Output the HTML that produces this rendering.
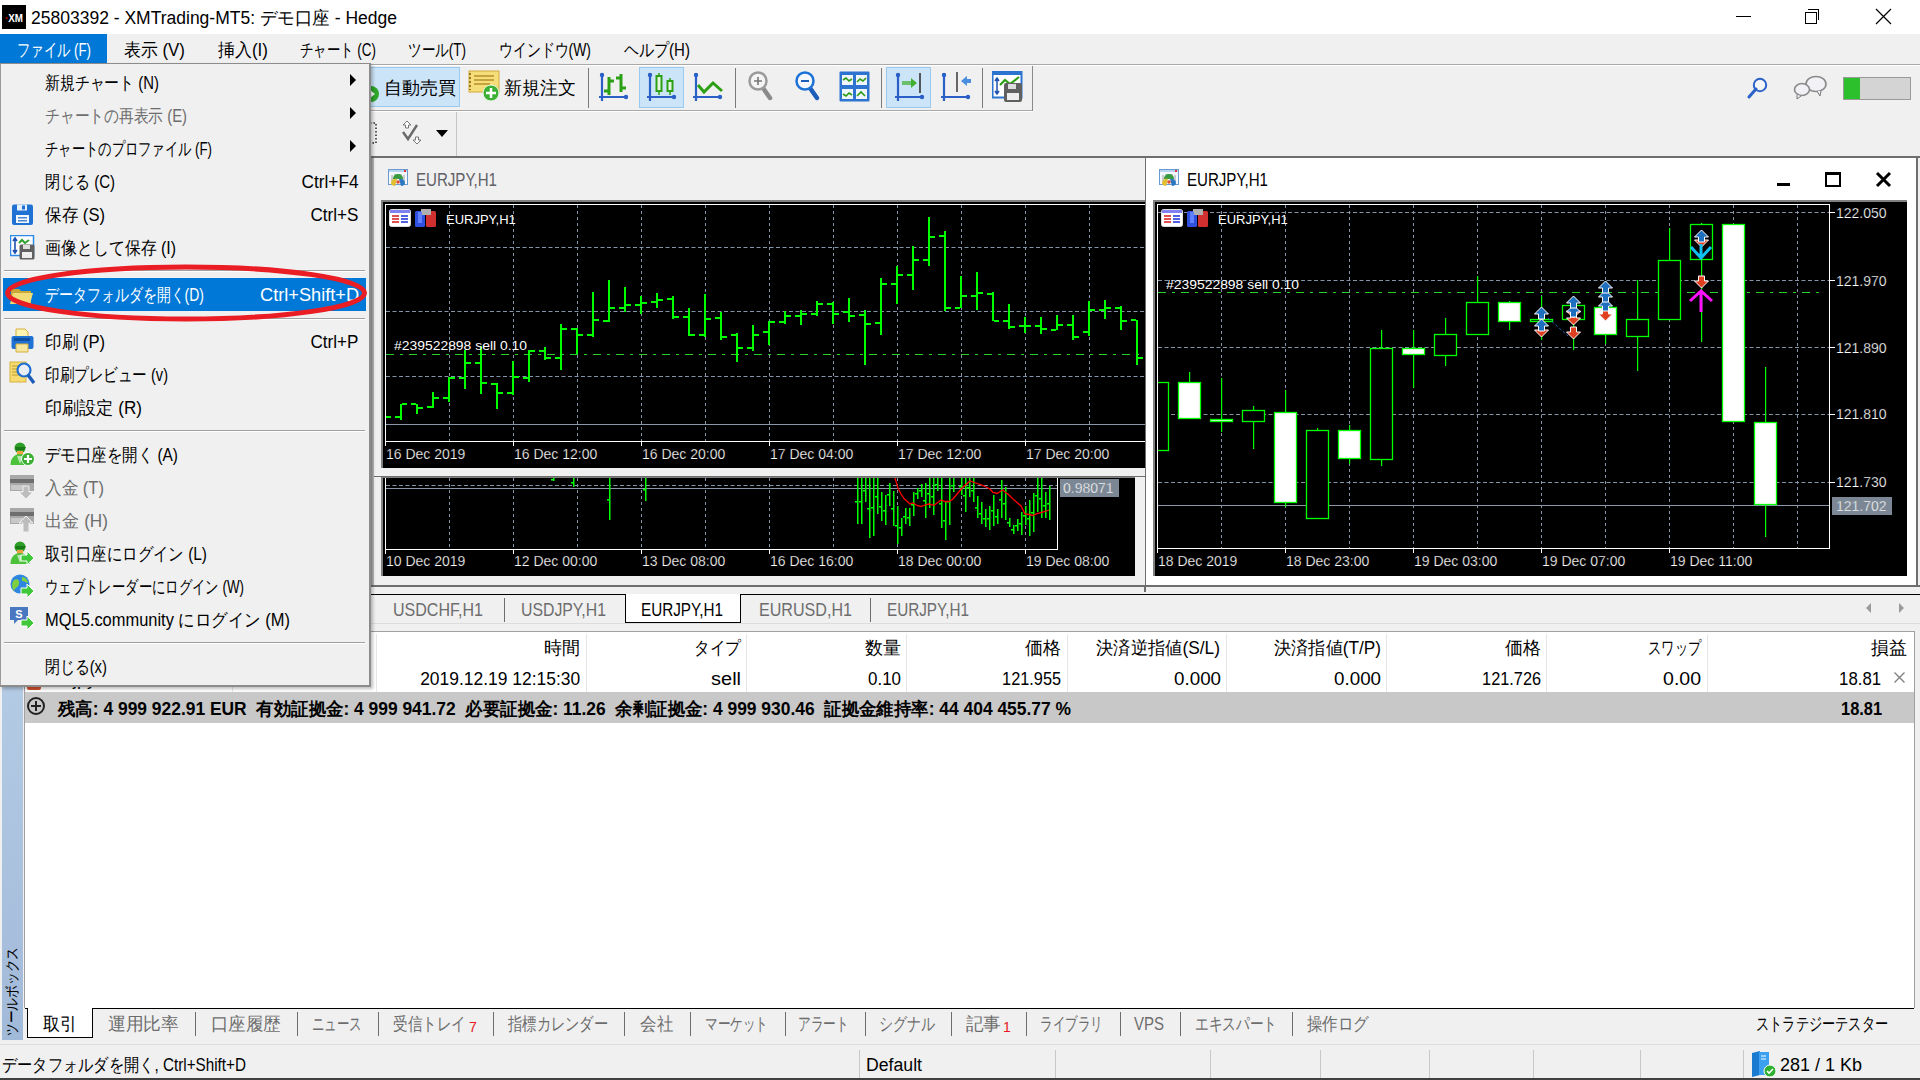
<!DOCTYPE html><html><head><meta charset="utf-8"><style>
html,body{margin:0;padding:0;}
body{width:1920px;height:1080px;overflow:hidden;position:relative;background:#f0f0f0;font-family:"Liberation Sans", sans-serif;}
body>div{position:absolute;white-space:nowrap;}
svg{position:absolute;}
</style></head><body>
<div style="left:0px;top:0px;width:1920px;height:34px;background:#ffffff;"></div>
<div style="left:2px;top:5px;width:24px;height:24px;background:#000;"></div>
<div id="t1" class="fit" style="left:5px;top:12.7px;font-size:11px;line-height:11px;color:#fff;font-weight:700;transform:scaleX(0.8923);transform-origin:left 0;"><span style="color:#d00">·</span>XM</div>
<div id="t2" class="fit" style="left:31px;top:8.8px;font-size:18px;line-height:18px;color:#000;transform:scaleX(0.9722);transform-origin:left 0;">25803392 - XMTrading-MT5: デモ口座 - Hedge</div>
<div style="left:1736px;top:16px;width:15px;height:1px;background:#000;"></div>
<div style="left:1805px;top:12px;width:10px;height:10px;border:1px solid #000;"></div>
<div style="left:1808px;top:9px;width:10px;height:10px;border-top:1px solid #000;border-right:1px solid #000;"></div>
<svg style="position:absolute;left:1875px;top:8px;" width="18" height="17" viewBox="0 0 18 17"><path d="M1 1L16 16M16 1L1 16" stroke="#000" stroke-width="1.2"/></svg>
<div style="left:0px;top:34px;width:1920px;height:30px;background:#f0f0f0;"></div>
<div style="left:0px;top:34px;width:107px;height:29px;background:#0078d7;"></div>
<div id="t3" class="fit" style="left:17px;top:41.3px;font-size:18px;line-height:18px;color:#fff;transform:scaleX(0.7401);transform-origin:left 0;">ファイル (F)</div>
<div id="t4" class="fit" style="left:124px;top:41.3px;font-size:18px;line-height:18px;color:#000;transform:scaleX(0.9385);transform-origin:left 0;">表示 (V)</div>
<div id="t5" class="fit" style="left:218px;top:41.3px;font-size:18px;line-height:18px;color:#000;transform:scaleX(0.9434);transform-origin:left 0;">挿入(I)</div>
<div id="t6" class="fit" style="left:300px;top:41.3px;font-size:18px;line-height:18px;color:#000;transform:scaleX(0.7451);transform-origin:left 0;">チャート (C)</div>
<div id="t7" class="fit" style="left:408px;top:41.3px;font-size:18px;line-height:18px;color:#000;transform:scaleX(0.7534);transform-origin:left 0;">ツール(T)</div>
<div id="t8" class="fit" style="left:499px;top:41.3px;font-size:18px;line-height:18px;color:#000;transform:scaleX(0.7732);transform-origin:left 0;">ウインドウ(W)</div>
<div id="t9" class="fit" style="left:624px;top:41.3px;font-size:18px;line-height:18px;color:#000;transform:scaleX(0.8354);transform-origin:left 0;">ヘルプ(H)</div>
<div style="left:0px;top:64px;width:1920px;height:1px;background:#a8a8a8;"></div>
<div style="left:0px;top:65px;width:1920px;height:1px;background:#ffffff;"></div>
<div style="left:0px;top:110px;width:1033px;height:1px;background:#a8a8a8;"></div>
<div style="left:0px;top:111px;width:1033px;height:1px;background:#ffffff;"></div>
<div style="left:1032px;top:66px;width:1px;height:45px;background:#8a8a8a;"></div>
<div style="left:456px;top:112px;width:1px;height:44px;background:#c4c4c4;"></div>
<div style="left:0px;top:156px;width:1920px;height:2px;background:#6e6e6e;"></div>
<div style="left:369px;top:67px;width:91px;height:40px;background:#cce4f7;border:1px solid #99c9ef;box-sizing:border-box;"></div>
<div id="t10" class="fit" style="left:384px;top:79.3px;font-size:18px;line-height:18px;color:#000;transform:scaleX(1.0000);transform-origin:left 0;">自動売買</div>
<div id="t11" class="fit" style="left:504px;top:79.3px;font-size:18px;line-height:18px;color:#000;transform:scaleX(1.0000);transform-origin:left 0;">新規注文</div>
<div style="left:588px;top:68px;width:1px;height:40px;background:#7a7a7a;"></div>
<div style="left:735px;top:68px;width:1px;height:40px;background:#7a7a7a;"></div>
<div style="left:881px;top:68px;width:1px;height:40px;background:#7a7a7a;"></div>
<div style="left:982px;top:68px;width:1px;height:40px;background:#7a7a7a;"></div>
<div style="left:639px;top:67px;width:45px;height:41px;background:#cce4f7;border:1px solid #99c9ef;box-sizing:border-box;"></div>
<div style="left:886px;top:67px;width:45px;height:41px;background:#cce4f7;border:1px solid #99c9ef;box-sizing:border-box;"></div>
<svg style="position:absolute;left:362px;top:85px;" width="18" height="18" viewBox="0 0 18 18"><circle cx="9" cy="9" r="8" fill="#2fa52a"/><path d="M8 5l5 4-5 4z" fill="#fff"/></svg>
<svg style="position:absolute;left:468px;top:70px;" width="33" height="33" viewBox="0 0 33 33"><rect x="1" y="1" width="30" height="21" fill="#f5de7a" stroke="#d2a83a"/><path d="M6 6h20M6 10h20M6 14h16" stroke="#b8902a" stroke-width="1.6"/><path d="M2 3v17" stroke="#9a7a20" stroke-dasharray="2,2" stroke-width="2"/><circle cx="23" cy="23" r="8" fill="#3cb034" stroke="#e8f5e0"/><path d="M23 18v10M18 23h10" stroke="#fff" stroke-width="2.5"/></svg>
<svg style="position:absolute;left:598px;top:71px;" width="32" height="32" viewBox="0 0 32 32"><path d="M4 2v28M1 26h28" stroke="#2a5fc8" stroke-width="2.2"/><circle cx="4" cy="4" r="2.2" fill="#2a5fc8"/><circle cx="28" cy="26" r="2.2" fill="#2a5fc8"/><path d="M11 6V24M6 20h5M11 10h5" stroke="#2ca014" stroke-width="3"/><path d="M23 3V21M18 7h5M23 17h5" stroke="#2ca014" stroke-width="3"/></svg>
<svg style="position:absolute;left:646px;top:71px;" width="32" height="32" viewBox="0 0 32 32"><path d="M4 2v28M1 26h28" stroke="#2a5fc8" stroke-width="2.2"/><circle cx="4" cy="4" r="2.2" fill="#2a5fc8"/><circle cx="28" cy="26" r="2.2" fill="#2a5fc8"/><path d="M13 2v22M24 7v17" stroke="#2ca014" stroke-width="1.5"/><rect x="10.5" y="5" width="5" height="15" fill="#e6f6e0" stroke="#2ca014" stroke-width="2"/><rect x="21.5" y="10" width="5" height="10" fill="#e6f6e0" stroke="#2ca014" stroke-width="2"/></svg>
<svg style="position:absolute;left:692px;top:71px;" width="32" height="32" viewBox="0 0 32 32"><path d="M4 2v28M1 26h28" stroke="#2a5fc8" stroke-width="2.2"/><circle cx="4" cy="4" r="2.2" fill="#2a5fc8"/><circle cx="28" cy="26" r="2.2" fill="#2a5fc8"/><path d="M6 14l6 7 9-9 9 8" fill="none" stroke="#2ca014" stroke-width="3"/></svg>
<svg style="position:absolute;left:745px;top:70px;" width="32" height="34" viewBox="0 0 32 34"><path d="M18 18l7 10" stroke="#8a8a8a" stroke-width="4.5" stroke-linecap="round"/><circle cx="13" cy="11" r="8.5" fill="#f4f4f4" stroke="#9a9a9a" stroke-width="2.5"/><path d="M13 7v8M9 11h8" stroke="#777" stroke-width="1.6"/></svg>
<svg style="position:absolute;left:792px;top:70px;" width="32" height="34" viewBox="0 0 32 34"><path d="M18 18l7 10" stroke="#1d5cb8" stroke-width="4.5" stroke-linecap="round"/><circle cx="13" cy="11" r="8.5" fill="#f4f8fc" stroke="#1d72d8" stroke-width="2.5"/><path d="M9 11h8" stroke="#1d5cb8" stroke-width="2"/></svg>
<svg style="position:absolute;left:839px;top:71px;" width="32" height="32" viewBox="0 0 32 32"><rect x="0.5" y="0.5" width="30" height="30" rx="1" fill="#2d74d0"/><rect x="3" y="4" width="11" height="10" fill="#eef6fb"/><rect x="17" y="4" width="11" height="10" fill="#eef6fb"/><rect x="3" y="18" width="11" height="10" fill="#eef6fb"/><rect x="17" y="18" width="11" height="10" fill="#eef6fb"/><path d="M4 9l3-2 3 3 3-2M18 11l3-3 3 2 3-3M4 23l3 2 3-3 3 2M18 25l4-4 4 4" stroke="#2c9a14" stroke-width="1.6" fill="none"/></svg>
<svg style="position:absolute;left:894px;top:71px;" width="32" height="32" viewBox="0 0 32 32"><path d="M4 2v28M1 26h28" stroke="#2a5fc8" stroke-width="2.2"/><circle cx="4" cy="4" r="2.2" fill="#2a5fc8"/><circle cx="28" cy="26" r="2.2" fill="#2a5fc8"/><path d="M8 12h11" stroke="#40b030" stroke-width="4" opacity="0.7"/><path d="M17 7l6 5-6 5z" fill="#40b030"/><path d="M26 2v20" stroke="#333" stroke-width="1.6"/></svg>
<svg style="position:absolute;left:940px;top:71px;" width="32" height="32" viewBox="0 0 32 32"><path d="M4 2v28M1 26h28" stroke="#2a5fc8" stroke-width="2.2"/><circle cx="4" cy="4" r="2.2" fill="#2a5fc8"/><circle cx="28" cy="26" r="2.2" fill="#2a5fc8"/><path d="M17 1v20" stroke="#444" stroke-width="1.6"/><path d="M21 10l6-5v3h4v4h-4v3z" fill="#4a8ee0"/></svg>
<svg style="position:absolute;left:992px;top:71px;" width="32" height="32" viewBox="0 0 32 32"><rect x="0.5" y="0.5" width="29" height="26" fill="#fff" stroke="#2d74d0" stroke-width="2"/><rect x="0" y="0" width="30" height="4" fill="#2d74d0"/><path d="M5 8v14M3 10l2-3 2 3M3 20l2 3 2-3" stroke="#1e50b0" stroke-width="1.5" fill="none"/><path d="M8 14l5-5 5 4 9-7" stroke="#2ca014" stroke-width="2.2" fill="none"/><rect x="12" y="12" width="18" height="19" rx="2" fill="#606060"/><rect x="15" y="22" width="12" height="7" fill="#eee"/><rect x="16" y="13" width="8" height="5" fill="#ddd"/></svg>
<svg style="position:absolute;left:1746px;top:76px;" width="24" height="24" viewBox="0 0 24 24"><circle cx="14" cy="9" r="6.2" fill="#f4f6f8" stroke="#2a62c8" stroke-width="2"/><path d="M10 13l-7 8" stroke="#2a62c8" stroke-width="3" stroke-linecap="round"/></svg>
<svg style="position:absolute;left:1793px;top:75px;" width="36" height="26" viewBox="0 0 36 26"><ellipse cx="23" cy="9" rx="10" ry="7.5" fill="#f2f2f6" stroke="#8a8a8a" stroke-width="1.6"/><path d="M24 16l3 5 1-5" fill="#f2f2f6" stroke="#777"/><ellipse cx="9" cy="14.5" rx="7.5" ry="6" fill="#f2f2f6" stroke="#8a8a8a" stroke-width="1.6"/><path d="M4 20l0 4 4-3" fill="#f2f2f6" stroke="#777"/></svg>
<svg style="position:absolute;left:1843px;top:77px;" width="69" height="24" viewBox="0 0 69 24"><rect x="0.5" y="0.5" width="67" height="22" fill="#d4d4d4" stroke="#9a9a9a"/><rect x="1" y="1" width="16" height="21" fill="#2cc02c"/></svg>
<svg style="position:absolute;left:369px;top:122px;" width="9" height="22" viewBox="0 0 9 22"><path d="M1 1h6v20H1" fill="none" stroke="#222" stroke-dasharray="1.5,2" stroke-width="1.5"/></svg>
<svg style="position:absolute;left:400px;top:120px;" width="26" height="26" viewBox="0 0 26 26"><path d="M3 12l5 7 9-14" stroke="#6a6a6a" stroke-width="2.4" fill="none"/><path d="M7 1l-4 4h2.5v3h3v-3h2.5z" fill="#fff" stroke="#777"/><path d="M17 24l4-4h-2.5v-3h-3v3h-2.5z" fill="#fff" stroke="#777"/></svg>
<svg style="position:absolute;left:436px;top:130px;" width="13" height="8" viewBox="0 0 13 8"><path d="M0 0h12L6 7z" fill="#000"/></svg>
<div style="left:369px;top:158px;width:776px;height:429px;background:#f0f0f0;"></div>
<div style="left:369px;top:158px;width:5px;height:429px;background:linear-gradient(90deg,#8a8a8a,#c0c0c0);"></div>
<div id="t12" class="fit" style="left:416px;top:170.8px;font-size:18px;line-height:18px;color:#606068;transform:scaleX(0.8375);transform-origin:left 0;">EURJPY,H1</div>
<div style="left:381px;top:200px;width:764px;height:268px;background:#808080;"></div>
<div style="left:383px;top:202px;width:762px;height:266px;background:#000;"></div>
<div style="left:374px;top:476px;width:771px;height:1px;background:#6e6e6e;"></div>
<div style="left:381px;top:477px;width:754px;height:99px;background:#808080;"></div>
<div style="left:383px;top:478px;width:752px;height:98px;background:#000;"></div>
<div style="left:1145px;top:158px;width:1px;height:429px;background:#6e6e6e;"></div>
<div style="left:1146px;top:158px;width:771px;height:428px;background:#ffffff;"></div>
<div style="left:1916px;top:158px;width:2px;height:429px;background:#6e6e6e;"></div>
<div id="t13" class="fit" style="left:1187px;top:171.3px;font-size:18px;line-height:18px;color:#000;transform:scaleX(0.8375);transform-origin:left 0;">EURJPY,H1</div>
<div style="left:1153px;top:200px;width:754px;height:376px;background:#808080;"></div>
<div style="left:1155px;top:202px;width:752px;height:374px;background:#000;"></div>
<div style="left:0px;top:585px;width:1920px;height:2px;background:#6e6e6e;"></div>
<svg style="position:absolute;left:383px;top:202px;" width="762" height="266" viewBox="0 0 762 266"><g transform="translate(-383,-202)"><line x1="449.5" y1="205" x2="449.5" y2="441" stroke="#8494a8" stroke-dasharray="3,3"/><line x1="513.5" y1="205" x2="513.5" y2="441" stroke="#8494a8" stroke-dasharray="3,3"/><line x1="577.5" y1="205" x2="577.5" y2="441" stroke="#8494a8" stroke-dasharray="3,3"/><line x1="641.5" y1="205" x2="641.5" y2="441" stroke="#8494a8" stroke-dasharray="3,3"/><line x1="705.5" y1="205" x2="705.5" y2="441" stroke="#8494a8" stroke-dasharray="3,3"/><line x1="769.5" y1="205" x2="769.5" y2="441" stroke="#8494a8" stroke-dasharray="3,3"/><line x1="833.5" y1="205" x2="833.5" y2="441" stroke="#8494a8" stroke-dasharray="3,3"/><line x1="897.5" y1="205" x2="897.5" y2="441" stroke="#8494a8" stroke-dasharray="3,3"/><line x1="961.5" y1="205" x2="961.5" y2="441" stroke="#8494a8" stroke-dasharray="3,3"/><line x1="1025.5" y1="205" x2="1025.5" y2="441" stroke="#8494a8" stroke-dasharray="3,3"/><line x1="1089.5" y1="205" x2="1089.5" y2="441" stroke="#8494a8" stroke-dasharray="3,3"/><line x1="386" y1="247.5" x2="1145" y2="247.5" stroke="#8494a8" stroke-dasharray="4,2.5"/><line x1="386" y1="311.5" x2="1145" y2="311.5" stroke="#8494a8" stroke-dasharray="4,2.5"/><line x1="386" y1="376.5" x2="1145" y2="376.5" stroke="#8494a8" stroke-dasharray="4,2.5"/><line x1="386" y1="424.5" x2="1145" y2="424.5" stroke="#8a98aa"/><line x1="386" y1="354.5" x2="1145" y2="354.5" stroke="#2ad02a" stroke-dasharray="8,6,3,6"/><line x1="385.5" y1="204" x2="385.5" y2="446" stroke="#fff"/><line x1="385" y1="204.5" x2="1145" y2="204.5" stroke="#fff"/><line x1="385" y1="441.5" x2="1145" y2="441.5" stroke="#fff"/><line x1="513.5" y1="441" x2="513.5" y2="446" stroke="#fff"/><line x1="641.5" y1="441" x2="641.5" y2="446" stroke="#fff"/><line x1="769.5" y1="441" x2="769.5" y2="446" stroke="#fff"/><line x1="897.5" y1="441" x2="897.5" y2="446" stroke="#fff"/><line x1="1025.5" y1="441" x2="1025.5" y2="446" stroke="#fff"/><path d="M386 416h5v2h-5zM400 404h2v16h-2zM395 416h5v2h-5zM402 403h5v2h-5zM416 404h2v10h-2zM411 403h5v2h-5zM418 407h5v2h-5zM432 392h2v16h-2zM427 406h5v2h-5zM434 397h5v2h-5zM448 377h2v25h-2zM443 397h5v2h-5zM450 377h5v2h-5zM464 350h2v39h-2zM459 377h5v2h-5zM466 362h5v2h-5zM480 346h2v48h-2zM475 362h5v2h-5zM482 382h5v2h-5zM496 383h2v26h-2zM491 383h5v2h-5zM498 392h5v2h-5zM512 361h2v34h-2zM507 392h5v2h-5zM514 376h5v2h-5zM528 350h2v32h-2zM523 377h5v2h-5zM530 350h5v2h-5zM544 347h2v13h-2zM539 350h5v2h-5zM546 357h5v2h-5zM560 324h2v46h-2zM555 357h5v2h-5zM562 328h5v2h-5zM576 328h2v26h-2zM571 328h5v2h-5zM578 334h5v2h-5zM592 292h2v45h-2zM587 334h5v2h-5zM594 319h5v2h-5zM608 280h2v42h-2zM603 320h5v2h-5zM610 307h5v2h-5zM624 287h2v25h-2zM619 307h5v2h-5zM626 304h5v2h-5zM640 296h2v18h-2zM635 304h5v2h-5zM642 302h5v2h-5zM656 293h2v15h-2zM651 301h5v2h-5zM658 299h5v2h-5zM672 296h2v23h-2zM667 298h5v2h-5zM674 316h5v2h-5zM688 308h2v28h-2zM683 316h5v2h-5zM690 334h5v2h-5zM704 294h2v43h-2zM699 334h5v2h-5zM706 318h5v2h-5zM720 312h2v28h-2zM715 317h5v2h-5zM722 336h5v2h-5zM736 333h2v29h-2zM731 334h5v2h-5zM738 347h5v2h-5zM752 325h2v26h-2zM747 347h5v2h-5zM754 334h5v2h-5zM768 321h2v24h-2zM763 331h5v2h-5zM770 321h5v2h-5zM784 311h2v13h-2zM779 321h5v2h-5zM786 315h5v2h-5zM800 310h2v15h-2zM795 315h5v2h-5zM802 313h5v2h-5zM816 301h2v15h-2zM811 313h5v2h-5zM818 303h5v2h-5zM832 302h2v22h-2zM827 303h5v2h-5zM834 313h5v2h-5zM848 298h2v24h-2zM843 311h5v2h-5zM850 315h5v2h-5zM864 310h2v55h-2zM859 314h5v2h-5zM866 323h5v2h-5zM880 278h2v57h-2zM875 322h5v2h-5zM882 283h5v2h-5zM896 266h2v38h-2zM891 283h5v2h-5zM898 274h5v2h-5zM912 246h2v44h-2zM907 274h5v2h-5zM914 259h5v2h-5zM928 217h2v49h-2zM923 259h5v2h-5zM930 236h5v2h-5zM944 231h2v80h-2zM939 235h5v2h-5zM946 307h5v2h-5zM960 276h2v32h-2zM955 307h5v2h-5zM962 295h5v2h-5zM976 272h2v38h-2zM971 295h5v2h-5zM978 292h5v2h-5zM992 292h2v29h-2zM987 293h5v2h-5zM994 320h5v2h-5zM1008 304h2v25h-2zM1003 320h5v2h-5zM1010 326h5v2h-5zM1024 317h2v16h-2zM1019 325h5v2h-5zM1026 325h5v2h-5zM1040 317h2v17h-2zM1035 325h5v2h-5zM1042 328h5v2h-5zM1056 315h2v15h-2zM1051 329h5v2h-5zM1058 324h5v2h-5zM1072 315h2v25h-2zM1067 324h5v2h-5zM1074 336h5v2h-5zM1088 301h2v35h-2zM1083 331h5v2h-5zM1090 309h5v2h-5zM1104 300h2v19h-2zM1099 309h5v2h-5zM1106 307h5v2h-5zM1120 306h2v24h-2zM1115 307h5v2h-5zM1122 320h5v2h-5zM1136 320h2v45h-2zM1131 319h5v2h-5zM1138 357h5v2h-5z" fill="#00ff00"/></g></svg>
<svg style="position:absolute;left:383px;top:478px;" width="752" height="98" viewBox="0 0 752 98"><g transform="translate(-383,-478)"><line x1="449.5" y1="478" x2="449.5" y2="549" stroke="#8494a8" stroke-dasharray="3,3"/><line x1="513.5" y1="478" x2="513.5" y2="549" stroke="#8494a8" stroke-dasharray="3,3"/><line x1="577.5" y1="478" x2="577.5" y2="549" stroke="#8494a8" stroke-dasharray="3,3"/><line x1="641.5" y1="478" x2="641.5" y2="549" stroke="#8494a8" stroke-dasharray="3,3"/><line x1="705.5" y1="478" x2="705.5" y2="549" stroke="#8494a8" stroke-dasharray="3,3"/><line x1="769.5" y1="478" x2="769.5" y2="549" stroke="#8494a8" stroke-dasharray="3,3"/><line x1="833.5" y1="478" x2="833.5" y2="549" stroke="#8494a8" stroke-dasharray="3,3"/><line x1="897.5" y1="478" x2="897.5" y2="549" stroke="#8494a8" stroke-dasharray="3,3"/><line x1="961.5" y1="478" x2="961.5" y2="549" stroke="#8494a8" stroke-dasharray="3,3"/><line x1="1025.5" y1="478" x2="1025.5" y2="549" stroke="#8494a8" stroke-dasharray="3,3"/><line x1="386" y1="485.5" x2="1057" y2="485.5" stroke="#8494a8" stroke-dasharray="4,2.5"/><line x1="386" y1="488.5" x2="1057" y2="488.5" stroke="#8a98aa"/><line x1="385.5" y1="478" x2="385.5" y2="554" stroke="#fff"/><line x1="385" y1="549.5" x2="1058" y2="549.5" stroke="#fff"/><line x1="1057.5" y1="478" x2="1057.5" y2="550" stroke="#fff"/><line x1="513.5" y1="549" x2="513.5" y2="554" stroke="#fff"/><line x1="641.5" y1="549" x2="641.5" y2="554" stroke="#fff"/><line x1="769.5" y1="549" x2="769.5" y2="554" stroke="#fff"/><line x1="897.5" y1="549" x2="897.5" y2="554" stroke="#fff"/><line x1="1025.5" y1="549" x2="1025.5" y2="554" stroke="#fff"/><path d="M553 478h1.5v3h-1.5zM551 479h2v1.5h-2zM573 478h1.5v9h-1.5zM571 482h2v1.5h-2zM609 478h1.5v42h-1.5zM607 499h2v1.5h-2zM645 478h1.5v23h-1.5zM643 489h2v1.5h-2zM857 478h1.5v46h-1.5zM855 501h2v1.5h-2zM861 478h1.5v46h-1.5zM859 501h2v1.5h-2zM865 478h1.5v24h-1.5zM863 490h2v1.5h-2zM869 478h1.5v60h-1.5zM867 508h2v1.5h-2zM873 478h1.5v58h-1.5zM871 507h2v1.5h-2zM877 478h1.5v36h-1.5zM875 496h2v1.5h-2zM881 492h1.5v29h-1.5zM879 506h2v1.5h-2zM885 495h1.5v30h-1.5zM883 510h2v1.5h-2zM889 483h1.5v23h-1.5zM887 494h2v1.5h-2zM893 491h1.5v35h-1.5zM891 508h2v1.5h-2zM897 506h1.5v38h-1.5zM895 525h2v1.5h-2zM901 518h1.5v18h-1.5zM899 527h2v1.5h-2zM905 508h1.5v16h-1.5zM903 516h2v1.5h-2zM909 508h1.5v18h-1.5zM907 517h2v1.5h-2zM913 492h1.5v24h-1.5zM911 504h2v1.5h-2zM917 488h1.5v11h-1.5zM915 493h2v1.5h-2zM921 484h1.5v13h-1.5zM919 490h2v1.5h-2zM925 483h1.5v35h-1.5zM923 500h2v1.5h-2zM929 478h1.5v30h-1.5zM927 493h2v1.5h-2zM933 478h1.5v37h-1.5zM931 496h2v1.5h-2zM937 478h1.5v13h-1.5zM935 484h2v1.5h-2zM941 478h1.5v50h-1.5zM939 503h2v1.5h-2zM945 501h1.5v39h-1.5zM943 520h2v1.5h-2zM949 478h1.5v47h-1.5zM947 501h2v1.5h-2zM953 478h1.5v14h-1.5zM951 485h2v1.5h-2zM961 478h1.5v17h-1.5zM959 486h2v1.5h-2zM965 478h1.5v34h-1.5zM963 495h2v1.5h-2zM969 478h1.5v19h-1.5zM967 487h2v1.5h-2zM973 478h1.5v24h-1.5zM971 490h2v1.5h-2zM977 496h1.5v22h-1.5zM975 507h2v1.5h-2zM981 502h1.5v22h-1.5zM979 513h2v1.5h-2zM985 509h1.5v18h-1.5zM983 518h2v1.5h-2zM989 506h1.5v24h-1.5zM987 518h2v1.5h-2zM993 495h1.5v31h-1.5zM991 510h2v1.5h-2zM997 509h1.5v15h-1.5zM995 516h2v1.5h-2zM1001 480h1.5v38h-1.5zM999 499h2v1.5h-2zM1005 487h1.5v33h-1.5zM1003 503h2v1.5h-2zM1009 518h1.5v9h-1.5zM1007 522h2v1.5h-2zM1013 525h1.5v9h-1.5zM1011 529h2v1.5h-2zM1017 519h1.5v12h-1.5zM1015 525h2v1.5h-2zM1021 512h1.5v23h-1.5zM1019 523h2v1.5h-2zM1025 506h1.5v19h-1.5zM1023 515h2v1.5h-2zM1029 500h1.5v36h-1.5zM1027 518h2v1.5h-2zM1033 493h1.5v39h-1.5zM1031 512h2v1.5h-2zM1037 478h1.5v34h-1.5zM1035 495h2v1.5h-2zM1041 478h1.5v40h-1.5zM1039 498h2v1.5h-2zM1045 492h1.5v26h-1.5zM1043 505h2v1.5h-2zM1049 486h1.5v34h-1.5zM1047 503h2v1.5h-2z" fill="#00ff00"/><path d="M895 478 L898 488 L901 494 L904 498.5 L910 504 L913 503 L917 505.5 L921 506.5 L925 505 L929 504 L934 505.4 L937 503 L941 500 L945 501.5 L949 501.5 L953 499 L962 488 L970 481 L973 482 L977 483.5 L981 484.7 L985 486.5 L990 489 L993 492.5 L997 493.5 L1001 491 L1003 490 L1005 492 L1009 495 L1013 499 L1017 502.5 L1021 506 L1025 514 L1029 514.5 L1033 515.5 L1037 513.7 L1041 512.6 L1045 511.5 L1049 510" fill="none" stroke="#ff0000" stroke-width="1.3"/></g></svg>
<svg style="position:absolute;left:1155px;top:202px;" width="752" height="374" viewBox="0 0 752 374"><g transform="translate(-1155,-202)"><line x1="1221.5" y1="205" x2="1221.5" y2="548" stroke="#8494a8" stroke-dasharray="3,3"/><line x1="1285.5" y1="205" x2="1285.5" y2="548" stroke="#8494a8" stroke-dasharray="3,3"/><line x1="1349.5" y1="205" x2="1349.5" y2="548" stroke="#8494a8" stroke-dasharray="3,3"/><line x1="1413.5" y1="205" x2="1413.5" y2="548" stroke="#8494a8" stroke-dasharray="3,3"/><line x1="1477.5" y1="205" x2="1477.5" y2="548" stroke="#8494a8" stroke-dasharray="3,3"/><line x1="1541.5" y1="205" x2="1541.5" y2="548" stroke="#8494a8" stroke-dasharray="3,3"/><line x1="1605.5" y1="205" x2="1605.5" y2="548" stroke="#8494a8" stroke-dasharray="3,3"/><line x1="1669.5" y1="205" x2="1669.5" y2="548" stroke="#8494a8" stroke-dasharray="3,3"/><line x1="1733.5" y1="205" x2="1733.5" y2="548" stroke="#8494a8" stroke-dasharray="3,3"/><line x1="1797.5" y1="205" x2="1797.5" y2="548" stroke="#8494a8" stroke-dasharray="3,3"/><line x1="1158" y1="212.5" x2="1829" y2="212.5" stroke="#8494a8" stroke-dasharray="4,2.5"/><line x1="1158" y1="280.5" x2="1829" y2="280.5" stroke="#8494a8" stroke-dasharray="4,2.5"/><line x1="1158" y1="347.5" x2="1829" y2="347.5" stroke="#8494a8" stroke-dasharray="4,2.5"/><line x1="1158" y1="414.5" x2="1829" y2="414.5" stroke="#8494a8" stroke-dasharray="4,2.5"/><line x1="1158" y1="482.5" x2="1829" y2="482.5" stroke="#8494a8" stroke-dasharray="4,2.5"/><line x1="1158" y1="505.5" x2="1829" y2="505.5" stroke="#8a98aa"/><line x1="1158" y1="292.5" x2="1823" y2="292.5" stroke="#2ad02a" stroke-dasharray="8,6,3,6"/><line x1="1157.5" y1="204" x2="1157.5" y2="553" stroke="#fff"/><line x1="1157" y1="204.5" x2="1830" y2="204.5" stroke="#fff"/><line x1="1157" y1="548.5" x2="1830" y2="548.5" stroke="#fff"/><line x1="1829.5" y1="204" x2="1829.5" y2="549" stroke="#fff"/><line x1="1285.5" y1="548" x2="1285.5" y2="553" stroke="#fff"/><line x1="1413.5" y1="548" x2="1413.5" y2="553" stroke="#fff"/><line x1="1541.5" y1="548" x2="1541.5" y2="553" stroke="#fff"/><line x1="1669.5" y1="548" x2="1669.5" y2="553" stroke="#fff"/><line x1="1829" y1="212.5" x2="1835" y2="212.5" stroke="#fff"/><line x1="1829" y1="280.5" x2="1835" y2="280.5" stroke="#fff"/><line x1="1829" y1="347.5" x2="1835" y2="347.5" stroke="#fff"/><line x1="1829" y1="414.5" x2="1835" y2="414.5" stroke="#fff"/><line x1="1829" y1="482.5" x2="1835" y2="482.5" stroke="#fff"/><rect x="1157" y="382" width="1.2" height="69" fill="#00ff00"/><rect x="1146.5" y="382.5" width="22" height="68" fill="#000" stroke="#00ff00" stroke-width="1.3"/><rect x="1189" y="372" width="1.2" height="47" fill="#00ff00"/><rect x="1178.5" y="382.5" width="22" height="36" fill="#fff" stroke="#00ff00" stroke-width="1.3"/><rect x="1221" y="378" width="1.2" height="54" fill="#00ff00"/><rect x="1210.5" y="419.5" width="22" height="2" fill="#fff" stroke="#00ff00" stroke-width="1.3"/><rect x="1253" y="406" width="1.2" height="43" fill="#00ff00"/><rect x="1242.5" y="410.5" width="22" height="11" fill="#000" stroke="#00ff00" stroke-width="1.3"/><rect x="1285" y="390" width="1.2" height="117" fill="#00ff00"/><rect x="1274.5" y="412.5" width="22" height="90" fill="#fff" stroke="#00ff00" stroke-width="1.3"/><rect x="1317" y="428" width="1.2" height="91" fill="#00ff00"/><rect x="1306.5" y="430.5" width="22" height="88" fill="#000" stroke="#00ff00" stroke-width="1.3"/><rect x="1349" y="425" width="1.2" height="39" fill="#00ff00"/><rect x="1338.5" y="430.5" width="22" height="28" fill="#fff" stroke="#00ff00" stroke-width="1.3"/><rect x="1381" y="330" width="1.2" height="136" fill="#00ff00"/><rect x="1370.5" y="348.5" width="22" height="111" fill="#000" stroke="#00ff00" stroke-width="1.3"/><rect x="1413" y="330" width="1.2" height="58" fill="#00ff00"/><rect x="1402.5" y="348.5" width="22" height="6" fill="#fff" stroke="#00ff00" stroke-width="1.3"/><rect x="1445" y="318" width="1.2" height="48" fill="#00ff00"/><rect x="1434.5" y="334.5" width="22" height="21" fill="#000" stroke="#00ff00" stroke-width="1.3"/><rect x="1477" y="276" width="1.2" height="59" fill="#00ff00"/><rect x="1466.5" y="302.5" width="22" height="32" fill="#000" stroke="#00ff00" stroke-width="1.3"/><rect x="1509" y="301" width="1.2" height="29" fill="#00ff00"/><rect x="1498.5" y="302.5" width="22" height="19" fill="#fff" stroke="#00ff00" stroke-width="1.3"/><rect x="1541" y="296" width="1.2" height="44" fill="#00ff00"/><rect x="1530.5" y="319.5" width="22" height="2" fill="#000" stroke="#00ff00" stroke-width="1.3"/><rect x="1573" y="297" width="1.2" height="53" fill="#00ff00"/><rect x="1562.5" y="305.5" width="22" height="14" fill="#000" stroke="#00ff00" stroke-width="1.3"/><rect x="1605" y="281" width="1.2" height="63" fill="#00ff00"/><rect x="1594.5" y="307.5" width="22" height="27" fill="#fff" stroke="#00ff00" stroke-width="1.3"/><rect x="1637" y="280" width="1.2" height="91" fill="#00ff00"/><rect x="1626.5" y="319.5" width="22" height="17" fill="#000" stroke="#00ff00" stroke-width="1.3"/><rect x="1669" y="228" width="1.2" height="92" fill="#00ff00"/><rect x="1658.5" y="260.5" width="22" height="59" fill="#000" stroke="#00ff00" stroke-width="1.3"/><rect x="1701" y="223" width="1.2" height="119" fill="#00ff00"/><rect x="1690.5" y="224.5" width="22" height="35" fill="#000" stroke="#00ff00" stroke-width="1.3"/><rect x="1733" y="224" width="1.2" height="198" fill="#00ff00"/><rect x="1722.5" y="224.5" width="22" height="197" fill="#fff" stroke="#00ff00" stroke-width="1.3"/><rect x="1765" y="367" width="1.2" height="170" fill="#00ff00"/><rect x="1754.5" y="422.5" width="22" height="82" fill="#fff" stroke="#00ff00" stroke-width="1.3"/><rect x="1155" y="204" width="2" height="345" fill="#000"/><line x1="1157.5" y1="204" x2="1157.5" y2="553" stroke="#fff"/><path d="M1541.5 337l-7 -7h4v-5h6v5h4z" fill="#e04020" stroke="#fff" stroke-width="1"/><path d="M1541.5 319l-7 7h4v5h6v-5h4z" fill="#1f6fc0" stroke="#fff" stroke-width="1"/><path d="M1541.5 307l-7 7h4v5h6v-5h4z" fill="#1f6fc0" stroke="#fff" stroke-width="1"/><path d="M1573.5 339l-7 -7h4v-5h6v5h4z" fill="#e04020" stroke="#fff" stroke-width="1"/><path d="M1573.5 325l-7 -7h4v-5h6v5h4z" fill="#e04020" stroke="#fff" stroke-width="1"/><path d="M1573.5 318l-7 -7h4v-5h6v5h4z" fill="#e04020" stroke="#fff" stroke-width="1"/><path d="M1573.5 305l-7 7h4v5h6v-5h4z" fill="#1f6fc0" stroke="#fff" stroke-width="1"/><path d="M1573.5 296l-7 7h4v5h6v-5h4z" fill="#1f6fc0" stroke="#fff" stroke-width="1"/><path d="M1605.5 321l-7 -7h4v-5h6v5h4z" fill="#e04020" stroke="#fff" stroke-width="1"/><path d="M1605.5 299l-7 7h4v5h6v-5h4z" fill="#1f6fc0" stroke="#fff" stroke-width="1"/><path d="M1605.5 290l-7 7h4v5h6v-5h4z" fill="#1f6fc0" stroke="#fff" stroke-width="1"/><path d="M1605.5 281l-7 7h4v5h6v-5h4z" fill="#1f6fc0" stroke="#fff" stroke-width="1"/><path d="M1701.5 247l-7 -7h4v-5h6v5h4z" fill="#e04020" stroke="#fff" stroke-width="1"/><path d="M1701.5 230l-7 7h4v5h6v-5h4z" fill="#1f6fc0" stroke="#fff" stroke-width="1"/><path d="M1701.5 288l-7 -7h4v-5h6v5h4z" fill="#e04020" stroke="#fff" stroke-width="1"/><path d="M1691 247L1701 258L1711 247M1701 258V244" fill="none" stroke="#10c0f0" stroke-width="3"/><path d="M1690 301L1701 291L1712 301M1701 291V312" fill="none" stroke="#ff10ff" stroke-width="3"/><line x1="1548" y1="318" x2="1568" y2="336" stroke="#2060b0" stroke-dasharray="3,2"/></g></svg>
<div id="t14" style="left:386px;top:447.3px;font-size:14px;line-height:14px;color:#fff;-webkit-text-stroke:0.25px #000;">16 Dec 2019</div>
<div id="t15" style="left:514px;top:447.3px;font-size:14px;line-height:14px;color:#fff;-webkit-text-stroke:0.25px #000;">16 Dec 12:00</div>
<div id="t16" style="left:642px;top:447.3px;font-size:14px;line-height:14px;color:#fff;-webkit-text-stroke:0.25px #000;">16 Dec 20:00</div>
<div id="t17" style="left:770px;top:447.3px;font-size:14px;line-height:14px;color:#fff;-webkit-text-stroke:0.25px #000;">17 Dec 04:00</div>
<div id="t18" style="left:898px;top:447.3px;font-size:14px;line-height:14px;color:#fff;-webkit-text-stroke:0.25px #000;">17 Dec 12:00</div>
<div id="t19" style="left:1026px;top:447.3px;font-size:14px;line-height:14px;color:#fff;-webkit-text-stroke:0.25px #000;">17 Dec 20:00</div>
<div id="t20" style="left:386px;top:554.3px;font-size:14px;line-height:14px;color:#fff;-webkit-text-stroke:0.25px #000;">10 Dec 2019</div>
<div id="t21" style="left:514px;top:554.3px;font-size:14px;line-height:14px;color:#fff;-webkit-text-stroke:0.25px #000;">12 Dec 00:00</div>
<div id="t22" style="left:642px;top:554.3px;font-size:14px;line-height:14px;color:#fff;-webkit-text-stroke:0.25px #000;">13 Dec 08:00</div>
<div id="t23" style="left:770px;top:554.3px;font-size:14px;line-height:14px;color:#fff;-webkit-text-stroke:0.25px #000;">16 Dec 16:00</div>
<div id="t24" style="left:898px;top:554.3px;font-size:14px;line-height:14px;color:#fff;-webkit-text-stroke:0.25px #000;">18 Dec 00:00</div>
<div id="t25" style="left:1026px;top:554.3px;font-size:14px;line-height:14px;color:#fff;-webkit-text-stroke:0.25px #000;">19 Dec 08:00</div>
<div id="t26" style="left:1158px;top:554.3px;font-size:14px;line-height:14px;color:#fff;-webkit-text-stroke:0.25px #000;">18 Dec 2019</div>
<div id="t27" style="left:1286px;top:554.3px;font-size:14px;line-height:14px;color:#fff;-webkit-text-stroke:0.25px #000;">18 Dec 23:00</div>
<div id="t28" style="left:1414px;top:554.3px;font-size:14px;line-height:14px;color:#fff;-webkit-text-stroke:0.25px #000;">19 Dec 03:00</div>
<div id="t29" style="left:1542px;top:554.3px;font-size:14px;line-height:14px;color:#fff;-webkit-text-stroke:0.25px #000;">19 Dec 07:00</div>
<div id="t30" style="left:1670px;top:554.3px;font-size:14px;line-height:14px;color:#fff;-webkit-text-stroke:0.25px #000;">19 Dec 11:00</div>
<div id="t31" style="left:1836px;top:206.3px;font-size:14px;line-height:14px;color:#fff;-webkit-text-stroke:0.25px #000;">122.050</div>
<div id="t32" style="left:1836px;top:274.3px;font-size:14px;line-height:14px;color:#fff;-webkit-text-stroke:0.25px #000;">121.970</div>
<div id="t33" style="left:1836px;top:340.8px;font-size:14px;line-height:14px;color:#fff;-webkit-text-stroke:0.25px #000;">121.890</div>
<div id="t34" style="left:1836px;top:407.3px;font-size:14px;line-height:14px;color:#fff;-webkit-text-stroke:0.25px #000;">121.810</div>
<div id="t35" style="left:1836px;top:475.3px;font-size:14px;line-height:14px;color:#fff;-webkit-text-stroke:0.25px #000;">121.730</div>
<div style="left:1832px;top:497px;width:60px;height:18px;background:#7b8794;"></div>
<div id="t36" style="left:1836px;top:498.8px;font-size:14px;line-height:14px;color:#fff;-webkit-text-stroke:0.35px #7b8794;">121.702</div>
<div style="left:1060px;top:479px;width:59px;height:18px;background:#7b8794;"></div>
<div id="t37" style="left:1063px;top:481.3px;font-size:14px;line-height:14px;color:#fff;-webkit-text-stroke:0.35px #7b8794;">0.98071</div>
<div id="t38" class="fit" style="left:394px;top:338.7px;font-size:13px;line-height:13px;color:#fff;transform:scaleX(1.0696);transform-origin:left 0;">#239522898 sell 0.10</div>
<div id="t39" class="fit" style="left:1166px;top:277.7px;font-size:13px;line-height:13px;color:#fff;transform:scaleX(1.0696);transform-origin:left 0;">#239522898 sell 0.10</div>
<div id="t40" style="left:446px;top:213.2px;font-size:13px;line-height:13px;color:#fff;">EURJPY,H1</div>
<div id="t41" style="left:1218px;top:213.2px;font-size:13px;line-height:13px;color:#fff;">EURJPY,H1</div>
<svg style="position:absolute;left:387px;top:168px;" width="23" height="23" viewBox="0 0 23 23"><rect x="1.5" y="1.5" width="19" height="15" fill="#f4f8fc" stroke="#6a9ad0"/><rect x="2" y="2" width="18" height="2" fill="#b8d4f0"/><rect x="17" y="2" width="2" height="2" fill="#e03030"/><path d="M5 7v7M8 6v9M14 6v8M17 7v7" stroke="#888" stroke-width="0.8"/><path d="M11 6c3 0 5 2 5 5h-10c0-3 2-5 5-5z" fill="#3a9a40"/><path d="M4 15c0-3 3-5 6-4l-2 7c-2 0-4-1-4-3z" fill="#e0c030"/><path d="M18 15c0-3-3-5-6-4l2 7c2 0 4-1 4-3z" fill="#2a78c0"/><circle cx="11" cy="14" r="1.8" fill="#e05030"/></svg>
<svg style="position:absolute;left:1158px;top:168px;" width="23" height="23" viewBox="0 0 23 23"><rect x="1.5" y="1.5" width="19" height="15" fill="#f4f8fc" stroke="#6a9ad0"/><rect x="2" y="2" width="18" height="2" fill="#b8d4f0"/><rect x="17" y="2" width="2" height="2" fill="#e03030"/><path d="M5 7v7M8 6v9M14 6v8M17 7v7" stroke="#888" stroke-width="0.8"/><path d="M11 6c3 0 5 2 5 5h-10c0-3 2-5 5-5z" fill="#3a9a40"/><path d="M4 15c0-3 3-5 6-4l-2 7c-2 0-4-1-4-3z" fill="#e0c030"/><path d="M18 15c0-3-3-5-6-4l2 7c2 0 4-1 4-3z" fill="#2a78c0"/><circle cx="11" cy="14" r="1.8" fill="#e05030"/></svg>
<svg style="position:absolute;left:389px;top:209px;" width="48" height="19" viewBox="0 0 48 19"><rect x="0.5" y="0.5" width="21" height="17" rx="2" fill="#fff" stroke="#ddd"/><rect x="1" y="1" width="20" height="3" fill="#8080f0"/><path d="M3 7h7M3 10h7M3 13h7" stroke="#e05050" stroke-width="2"/><path d="M12 7h7M12 10h7M12 13h7" stroke="#5060e0" stroke-width="2"/><g transform="translate(26,0)"><rect x="0" y="2" width="10" height="16" rx="1.5" fill="#3050e0"/><rect x="11" y="2" width="10" height="16" rx="1.5" fill="#d03030"/><rect x="6" y="0" width="10" height="6" fill="#b0b0b0"/><rect x="3" y="3" width="4" height="11" fill="#6080ff"/></g></svg>
<svg style="position:absolute;left:1161px;top:209px;" width="48" height="19" viewBox="0 0 48 19"><rect x="0.5" y="0.5" width="21" height="17" rx="2" fill="#fff" stroke="#ddd"/><rect x="1" y="1" width="20" height="3" fill="#8080f0"/><path d="M3 7h7M3 10h7M3 13h7" stroke="#e05050" stroke-width="2"/><path d="M12 7h7M12 10h7M12 13h7" stroke="#5060e0" stroke-width="2"/><g transform="translate(26,0)"><rect x="0" y="2" width="10" height="16" rx="1.5" fill="#3050e0"/><rect x="11" y="2" width="10" height="16" rx="1.5" fill="#d03030"/><rect x="6" y="0" width="10" height="6" fill="#b0b0b0"/><rect x="3" y="3" width="4" height="11" fill="#6080ff"/></g></svg>
<div style="left:1777px;top:183px;width:13px;height:3px;background:#000;"></div>
<div style="left:1825px;top:172px;width:16px;height:15px;border:2px solid #000;border-top-width:3px;box-sizing:border-box;"></div>
<svg style="position:absolute;left:1875px;top:171px;" width="18" height="17" viewBox="0 0 18 17"><path d="M2 2L15 15M15 2L2 15" stroke="#000" stroke-width="3"/></svg>
<div style="left:1144px;top:585px;width:2px;height:7px;background:#6e6e6e;"></div>
<div style="left:369px;top:594px;width:1551px;height:1px;background:#000;"></div>
<div style="left:369px;top:623px;width:1551px;height:1px;background:#dcdcdc;"></div>
<div style="left:625px;top:594px;width:116px;height:29px;background:#fff;border:1px solid #000;border-top:none;box-sizing:border-box;"></div>
<div id="t42" class="fit" style="left:393px;top:601.3px;font-size:18px;line-height:18px;color:#6d6d6d;transform:scaleX(0.8910);transform-origin:left 0;">USDCHF,H1</div>
<div id="t43" class="fit" style="left:521px;top:601.3px;font-size:18px;line-height:18px;color:#6d6d6d;transform:scaleX(0.8788);transform-origin:left 0;">USDJPY,H1</div>
<div id="t44" class="fit" style="left:641px;top:601.3px;font-size:18px;line-height:18px;color:#000;transform:scaleX(0.8478);transform-origin:left 0;">EURJPY,H1</div>
<div id="t45" class="fit" style="left:759px;top:601.3px;font-size:18px;line-height:18px;color:#6d6d6d;transform:scaleX(0.8940);transform-origin:left 0;">EURUSD,H1</div>
<div id="t46" class="fit" style="left:887px;top:601.3px;font-size:18px;line-height:18px;color:#6d6d6d;transform:scaleX(0.8478);transform-origin:left 0;">EURJPY,H1</div>
<div style="left:504px;top:598px;width:1px;height:24px;background:#6d6d6d;"></div>
<div style="left:870px;top:598px;width:1px;height:24px;background:#6d6d6d;"></div>
<svg style="position:absolute;left:1864px;top:602px;" width="10" height="12" viewBox="0 0 10 12"><path d="M7 1L2 6L7 11Z" fill="#9a9a9a"/></svg>
<svg style="position:absolute;left:1896px;top:602px;" width="10" height="12" viewBox="0 0 10 12"><path d="M3 1L8 6L3 11Z" fill="#9a9a9a"/></svg>
<div style="left:2px;top:628px;width:21px;height:412px;background:linear-gradient(180deg,#b6cde6,#a2bad9);"></div>
<div style="left:4px;top:1036px;font-size:15px;line-height:15px;color:#000;transform-origin:0 0;transform:rotate(-90deg) scaleX(0.85);">ツールボックス</div>
<div style="left:24px;top:631px;width:1891px;height:1px;background:#a0a0a0;"></div>
<div style="left:24px;top:631px;width:1px;height:377px;background:#a0a0a0;"></div>
<div style="left:25px;top:632px;width:1890px;height:376px;background:#ffffff;"></div>
<div id="t47" class="fit" style="right:1340px;top:639.3px;font-size:18px;line-height:18px;color:#000;transform:scaleX(1.0000);transform-origin:right 0;">時間</div>
<div id="t48" class="fit" style="right:1179px;top:639.3px;font-size:18px;line-height:18px;color:#000;transform:scaleX(0.8704);transform-origin:right 0;">タイプ</div>
<div id="t49" class="fit" style="right:1019px;top:639.3px;font-size:18px;line-height:18px;color:#000;transform:scaleX(1.0000);transform-origin:right 0;">数量</div>
<div id="t50" class="fit" style="right:859px;top:639.3px;font-size:18px;line-height:18px;color:#000;transform:scaleX(1.0000);transform-origin:right 0;">価格</div>
<div id="t51" class="fit" style="right:700px;top:639.3px;font-size:18px;line-height:18px;color:#000;transform:scaleX(0.9611);transform-origin:right 0;">決済逆指値(S/L)</div>
<div id="t52" class="fit" style="right:539px;top:639.3px;font-size:18px;line-height:18px;color:#000;transform:scaleX(0.9554);transform-origin:right 0;">決済指値(T/P)</div>
<div id="t53" class="fit" style="right:379px;top:639.3px;font-size:18px;line-height:18px;color:#000;transform:scaleX(1.0000);transform-origin:right 0;">価格</div>
<div id="t54" class="fit" style="right:219px;top:639.3px;font-size:18px;line-height:18px;color:#000;transform:scaleX(0.7361);transform-origin:right 0;">スワップ</div>
<div id="t55" class="fit" style="right:13px;top:639.3px;font-size:18px;line-height:18px;color:#000;transform:scaleX(1.0000);transform-origin:right 0;">損益</div>
<div style="left:232px;top:634px;width:1px;height:58px;background:#e6e6e6;"></div>
<div style="left:376px;top:634px;width:1px;height:58px;background:#e6e6e6;"></div>
<div style="left:586px;top:634px;width:1px;height:58px;background:#e6e6e6;"></div>
<div style="left:746px;top:634px;width:1px;height:58px;background:#e6e6e6;"></div>
<div style="left:906px;top:634px;width:1px;height:58px;background:#e6e6e6;"></div>
<div style="left:1067px;top:634px;width:1px;height:58px;background:#e6e6e6;"></div>
<div style="left:1226px;top:634px;width:1px;height:58px;background:#e6e6e6;"></div>
<div style="left:1386px;top:634px;width:1px;height:58px;background:#e6e6e6;"></div>
<div style="left:1546px;top:634px;width:1px;height:58px;background:#e6e6e6;"></div>
<div style="left:1707px;top:634px;width:1px;height:58px;background:#e6e6e6;"></div>
<div id="t56" class="fit" style="right:1340px;top:669.8px;font-size:18px;line-height:18px;color:#000;transform:scaleX(0.9688);transform-origin:right 0;">2019.12.19 12:15:30</div>
<div id="t57" class="fit" style="right:1179px;top:669.8px;font-size:18px;line-height:18px;color:#000;transform:scaleX(1.1105);transform-origin:right 0;">sell</div>
<div id="t58" class="fit" style="right:1019px;top:669.8px;font-size:18px;line-height:18px;color:#000;transform:scaleX(0.9416);transform-origin:right 0;">0.10</div>
<div id="t59" class="fit" style="right:859px;top:669.8px;font-size:18px;line-height:18px;color:#000;transform:scaleX(0.9066);transform-origin:right 0;">121.955</div>
<div id="t60" class="fit" style="right:699px;top:669.8px;font-size:18px;line-height:18px;color:#000;transform:scaleX(1.0434);transform-origin:right 0;">0.000</div>
<div id="t61" class="fit" style="right:539px;top:669.8px;font-size:18px;line-height:18px;color:#000;transform:scaleX(1.0434);transform-origin:right 0;">0.000</div>
<div id="t62" class="fit" style="right:379px;top:669.8px;font-size:18px;line-height:18px;color:#000;transform:scaleX(0.9066);transform-origin:right 0;">121.726</div>
<div id="t63" class="fit" style="right:219px;top:669.8px;font-size:18px;line-height:18px;color:#000;transform:scaleX(1.0843);transform-origin:right 0;">0.00</div>
<div id="t64" class="fit" style="right:39px;top:669.8px;font-size:18px;line-height:18px;color:#000;transform:scaleX(0.9324);transform-origin:right 0;">18.81</div>
<svg style="position:absolute;left:1894px;top:672px;" width="11" height="11" viewBox="0 0 11 11"><path d="M0.5 0.5L10.5 10.5M10.5 0.5L0.5 10.5" stroke="#808080" stroke-width="1.4"/></svg>
<div id="t65" style="left:47px;top:669.8px;font-size:18px;line-height:18px;color:#000;">eurjpy</div>
<svg style="position:absolute;left:27px;top:684px;" width="14" height="8" viewBox="0 0 14 8"><rect x="0" y="0" width="14" height="6" rx="2" fill="#d05030"/></svg>
<div style="left:25px;top:692px;width:1890px;height:31px;background:#c8c8c8;"></div>
<div style="left:27px;top:697px;width:18px;height:18px;border:2px solid #222;border-radius:50%;box-sizing:border-box;"></div>
<div style="left:31px;top:705px;width:10px;height:2px;background:#222;"></div>
<div style="left:35px;top:701px;width:2px;height:10px;background:#222;"></div>
<div id="t66" class="fit" style="left:58px;top:700.3px;font-size:18px;line-height:18px;color:#000;font-weight:700;transform:scaleX(0.9671);transform-origin:left 0;">残高: 4 999 922.91 EUR&nbsp;&nbsp;有効証拠金: 4 999 941.72&nbsp;&nbsp;必要証拠金: 11.26&nbsp;&nbsp;余剰証拠金: 4 999 930.46&nbsp;&nbsp;証拠金維持率: 44 404 455.77 %</div>
<div id="t67" class="fit" style="right:38px;top:700.3px;font-size:18px;line-height:18px;color:#000;font-weight:700;transform:scaleX(0.9102);transform-origin:right 0;">18.81</div>
<div style="left:25px;top:1008px;width:1889px;height:1px;background:#000;"></div>
<div style="left:1914px;top:632px;width:1px;height:376px;background:#a0a0a0;"></div>
<div style="left:27px;top:1008px;width:66px;height:30px;background:#fff;border:1px solid #000;border-top:none;box-sizing:border-box;"></div>
<div id="t68" class="fit" style="left:43px;top:1015.3px;font-size:18px;line-height:18px;color:#000;transform:scaleX(0.9444);transform-origin:left 0;">取引</div>
<div id="t69" class="fit" style="left:108px;top:1015.3px;font-size:18px;line-height:18px;color:#6d6d6d;transform:scaleX(0.9861);transform-origin:left 0;">運用比率</div>
<div id="t70" class="fit" style="left:211px;top:1015.3px;font-size:18px;line-height:18px;color:#6d6d6d;transform:scaleX(0.9722);transform-origin:left 0;">口座履歴</div>
<div id="t71" class="fit" style="left:312px;top:1015.3px;font-size:18px;line-height:18px;color:#6d6d6d;transform:scaleX(0.6944);transform-origin:left 0;">ニュース</div>
<div id="t72" class="fit" style="left:393px;top:1015.3px;font-size:18px;line-height:18px;color:#6d6d6d;transform:scaleX(0.8111);transform-origin:left 0;">受信トレイ</div>
<div id="t73" class="fit" style="left:508px;top:1015.3px;font-size:18px;line-height:18px;color:#6d6d6d;transform:scaleX(0.7937);transform-origin:left 0;">指標カレンダー</div>
<div id="t74" class="fit" style="left:640px;top:1015.3px;font-size:18px;line-height:18px;color:#6d6d6d;transform:scaleX(0.9167);transform-origin:left 0;">会社</div>
<div id="t75" class="fit" style="left:705px;top:1015.3px;font-size:18px;line-height:18px;color:#6d6d6d;transform:scaleX(0.7000);transform-origin:left 0;">マーケット</div>
<div id="t76" class="fit" style="left:798px;top:1015.3px;font-size:18px;line-height:18px;color:#6d6d6d;transform:scaleX(0.7083);transform-origin:left 0;">アラート</div>
<div id="t77" class="fit" style="left:879px;top:1015.3px;font-size:18px;line-height:18px;color:#6d6d6d;transform:scaleX(0.7778);transform-origin:left 0;">シグナル</div>
<div id="t78" class="fit" style="left:966px;top:1015.3px;font-size:18px;line-height:18px;color:#6d6d6d;transform:scaleX(0.9722);transform-origin:left 0;">記事</div>
<div id="t79" class="fit" style="left:1040px;top:1015.3px;font-size:18px;line-height:18px;color:#6d6d6d;transform:scaleX(0.7000);transform-origin:left 0;">ライブラリ</div>
<div id="t80" class="fit" style="left:1134px;top:1015.3px;font-size:18px;line-height:18px;color:#6d6d6d;transform:scaleX(0.8326);transform-origin:left 0;">VPS</div>
<div id="t81" class="fit" style="left:1195px;top:1015.3px;font-size:18px;line-height:18px;color:#6d6d6d;transform:scaleX(0.7593);transform-origin:left 0;">エキスパート</div>
<div id="t82" class="fit" style="left:1307px;top:1015.3px;font-size:18px;line-height:18px;color:#6d6d6d;transform:scaleX(0.8611);transform-origin:left 0;">操作ログ</div>
<div id="t83" style="left:469px;top:1020.3px;font-size:14px;line-height:14px;color:#e81818;">7</div>
<div id="t84" style="left:1003px;top:1020.3px;font-size:14px;line-height:14px;color:#e81818;">1</div>
<div style="left:195px;top:1012px;width:1px;height:24px;background:#6d6d6d;"></div>
<div style="left:297px;top:1012px;width:1px;height:24px;background:#6d6d6d;"></div>
<div style="left:378px;top:1012px;width:1px;height:24px;background:#6d6d6d;"></div>
<div style="left:493px;top:1012px;width:1px;height:24px;background:#6d6d6d;"></div>
<div style="left:624px;top:1012px;width:1px;height:24px;background:#6d6d6d;"></div>
<div style="left:690px;top:1012px;width:1px;height:24px;background:#6d6d6d;"></div>
<div style="left:785px;top:1012px;width:1px;height:24px;background:#6d6d6d;"></div>
<div style="left:865px;top:1012px;width:1px;height:24px;background:#6d6d6d;"></div>
<div style="left:951px;top:1012px;width:1px;height:24px;background:#6d6d6d;"></div>
<div style="left:1026px;top:1012px;width:1px;height:24px;background:#6d6d6d;"></div>
<div style="left:1120px;top:1012px;width:1px;height:24px;background:#6d6d6d;"></div>
<div style="left:1180px;top:1012px;width:1px;height:24px;background:#6d6d6d;"></div>
<div style="left:1292px;top:1012px;width:1px;height:24px;background:#6d6d6d;"></div>
<div id="t85" class="fit" style="left:1756px;top:1015.3px;font-size:18px;line-height:18px;color:#000;transform:scaleX(0.7333);transform-origin:left 0;">ストラテジーテスター</div>
<div style="left:0px;top:1044px;width:1920px;height:1px;background:#dcdcdc;"></div>
<div id="t86" class="fit" style="left:2px;top:1056.3px;font-size:18px;line-height:18px;color:#000;transform:scaleX(0.8471);transform-origin:left 0;">データフォルダを開く, Ctrl+Shift+D</div>
<div style="left:859px;top:1050px;width:1px;height:28px;background:#c8c8c8;"></div>
<div style="left:1055px;top:1050px;width:1px;height:28px;background:#c8c8c8;"></div>
<div style="left:1210px;top:1050px;width:1px;height:28px;background:#c8c8c8;"></div>
<div style="left:1320px;top:1050px;width:1px;height:28px;background:#c8c8c8;"></div>
<div style="left:1429px;top:1050px;width:1px;height:28px;background:#c8c8c8;"></div>
<div style="left:1533px;top:1050px;width:1px;height:28px;background:#c8c8c8;"></div>
<div style="left:1640px;top:1050px;width:1px;height:28px;background:#c8c8c8;"></div>
<div style="left:1743px;top:1050px;width:1px;height:28px;background:#c8c8c8;"></div>
<div id="t87" class="fit" style="left:866px;top:1056.3px;font-size:18px;line-height:18px;color:#000;transform:scaleX(0.9816);transform-origin:left 0;">Default</div>
<div id="t88" class="fit" style="left:1780px;top:1056.3px;font-size:18px;line-height:18px;color:#000;transform:scaleX(0.9990);transform-origin:left 0;">281 / 1 Kb</div>
<svg style="position:absolute;left:1750px;top:1051px;" width="28" height="27" viewBox="0 0 28 27"><path d="M2 2l8-2v24l-8 2z" fill="#1a7ad0"/><rect x="9" y="1" width="10" height="23" fill="#3ba0f0"/><path d="M11 5h5M11 8h5" stroke="#fff"/><circle cx="20" cy="20" r="6" fill="#2eb030" stroke="#fff"/><path d="M17 20l2 2 4-4" stroke="#fff" stroke-width="1.6" fill="none"/></svg>
<div style="left:0px;top:1078px;width:1920px;height:2px;background:#404040;"></div>
<div style="left:0px;top:63px;width:371px;height:624px;background:#f0f0f0;border:2px solid #8c8c8c;border-top:1px solid #8c8c8c;border-left:1px solid #9a9a9a;box-sizing:border-box;box-shadow:2px 2px 3px rgba(0,0,0,0.25);"></div>
<div style="left:3px;top:278px;width:363px;height:33px;background:#0078d7;"></div>
<div id="t89" class="fit" style="left:45px;top:73.6px;font-size:18px;line-height:18px;color:#000;transform:scaleX(0.8261);transform-origin:left 0;">新規チャート (N)</div>
<svg style="position:absolute;left:349px;top:74px;" width="8" height="12" viewBox="0 0 8 12"><path d="M1 0L7 6L1 12Z" fill="#000"/></svg>
<div id="t90" class="fit" style="left:45px;top:106.6px;font-size:18px;line-height:18px;color:#6d6d6d;transform:scaleX(0.8208);transform-origin:left 0;">チャートの再表示 (E)</div>
<svg style="position:absolute;left:349px;top:107px;" width="8" height="12" viewBox="0 0 8 12"><path d="M1 0L7 6L1 12Z" fill="#000"/></svg>
<div id="t91" class="fit" style="left:45px;top:139.6px;font-size:18px;line-height:18px;color:#000;transform:scaleX(0.7390);transform-origin:left 0;">チャートのプロファイル (F)</div>
<svg style="position:absolute;left:349px;top:140px;" width="8" height="12" viewBox="0 0 8 12"><path d="M1 0L7 6L1 12Z" fill="#000"/></svg>
<div id="t92" class="fit" style="left:45px;top:172.6px;font-size:18px;line-height:18px;color:#000;transform:scaleX(0.8333);transform-origin:left 0;">閉じる (C)</div>
<div id="t93" class="fit" style="right:1561px;top:172.6px;font-size:18px;line-height:18px;color:#000;transform:scaleX(0.9577);transform-origin:right 0;">Ctrl+F4</div>
<div id="t94" class="fit" style="left:45px;top:205.6px;font-size:18px;line-height:18px;color:#000;transform:scaleX(0.9231);transform-origin:left 0;">保存 (S)</div>
<div id="t95" class="fit" style="right:1561px;top:205.6px;font-size:18px;line-height:18px;color:#000;transform:scaleX(0.9502);transform-origin:right 0;">Ctrl+S</div>
<div id="t96" class="fit" style="left:45px;top:238.6px;font-size:18px;line-height:18px;color:#000;transform:scaleX(0.8851);transform-origin:left 0;">画像として保存 (I)</div>
<div id="t97" class="fit" style="left:45px;top:285.6px;font-size:18px;line-height:18px;color:#fff;transform:scaleX(0.7756);transform-origin:left 0;">データフォルダを開く(D)</div>
<div id="t98" class="fit" style="right:1561px;top:285.6px;font-size:18px;line-height:18px;color:#fff;transform:scaleX(1.0097);transform-origin:right 0;">Ctrl+Shift+D</div>
<div id="t99" class="fit" style="left:45px;top:332.6px;font-size:18px;line-height:18px;color:#000;transform:scaleX(0.9231);transform-origin:left 0;">印刷 (P)</div>
<div id="t100" class="fit" style="right:1561px;top:332.6px;font-size:18px;line-height:18px;color:#000;transform:scaleX(0.9502);transform-origin:right 0;">Ctrl+P</div>
<div id="t101" class="fit" style="left:45px;top:365.6px;font-size:18px;line-height:18px;color:#000;transform:scaleX(0.8092);transform-origin:left 0;">印刷プレビュー (v)</div>
<div id="t102" class="fit" style="left:45px;top:398.6px;font-size:18px;line-height:18px;color:#000;transform:scaleX(0.9510);transform-origin:left 0;">印刷設定 (R)</div>
<div id="t103" class="fit" style="left:45px;top:445.6px;font-size:18px;line-height:18px;color:#000;transform:scaleX(0.8581);transform-origin:left 0;">デモ口座を開く (A)</div>
<div id="t104" class="fit" style="left:45px;top:478.6px;font-size:18px;line-height:18px;color:#6d6d6d;transform:scaleX(0.9221);transform-origin:left 0;">入金 (T)</div>
<div id="t105" class="fit" style="left:45px;top:511.6px;font-size:18px;line-height:18px;color:#6d6d6d;transform:scaleX(0.9545);transform-origin:left 0;">出金 (H)</div>
<div id="t106" class="fit" style="left:45px;top:544.6px;font-size:18px;line-height:18px;color:#000;transform:scaleX(0.8571);transform-origin:left 0;">取引口座にログイン (L)</div>
<div id="t107" class="fit" style="left:45px;top:577.6px;font-size:18px;line-height:18px;color:#000;transform:scaleX(0.7426);transform-origin:left 0;">ウェブトレーダーにログイン (W)</div>
<div id="t108" class="fit" style="left:45px;top:610.6px;font-size:18px;line-height:18px;color:#000;transform:scaleX(0.9141);transform-origin:left 0;">MQL5.community にログイン (M)</div>
<div id="t109" class="fit" style="left:45px;top:657.6px;font-size:18px;line-height:18px;color:#000;transform:scaleX(0.8267);transform-origin:left 0;">閉じる(x)</div>
<div style="left:4px;top:270px;width:361px;height:1px;background:#a0a0a0;"></div>
<div style="left:4px;top:271px;width:361px;height:1px;background:#ffffff;"></div>
<div style="left:4px;top:318px;width:361px;height:1px;background:#a0a0a0;"></div>
<div style="left:4px;top:319px;width:361px;height:1px;background:#ffffff;"></div>
<div style="left:4px;top:430px;width:361px;height:1px;background:#a0a0a0;"></div>
<div style="left:4px;top:431px;width:361px;height:1px;background:#ffffff;"></div>
<div style="left:4px;top:642px;width:361px;height:1px;background:#a0a0a0;"></div>
<div style="left:4px;top:643px;width:361px;height:1px;background:#ffffff;"></div>
<svg style="position:absolute;left:11px;top:204px;" width="23" height="22" viewBox="0 0 23 22"><rect x="1" y="0.5" width="21" height="20.5" rx="2" fill="#1f72d4"/><rect x="6" y="0.5" width="10" height="6" fill="#e8f0fa"/><rect x="11" y="1.5" width="3" height="4" fill="#1f72d4"/><rect x="5" y="11" width="13" height="8" fill="#f4f8fc"/><rect x="7" y="13" width="9" height="1.5" fill="#4a86d8"/><rect x="7" y="16" width="9" height="1.5" fill="#4a86d8"/></svg>
<svg style="position:absolute;left:10px;top:235px;" width="25" height="25" viewBox="0 0 25 25"><rect x="0.5" y="0.5" width="23" height="20" fill="#fff" stroke="#2d8ae6" stroke-width="1.5"/><path d="M5 4v13M3 6l2-3 2 3M3 15l2 3 2-3" stroke="#1e50b0" stroke-width="1.6" fill="none"/><path d="M9 8l3-3 3 3 4-3" stroke="#2ca02c" stroke-width="2" fill="none"/><rect x="9.5" y="9.5" width="15" height="15" rx="1.5" fill="#606060"/><rect x="12" y="17" width="10" height="6" fill="#eee"/><rect x="13" y="10" width="7" height="4" fill="#ddd"/></svg>
<svg style="position:absolute;left:9px;top:284px;" width="26" height="22" viewBox="0 0 26 22"><path d="M2 5h8l2 2h10v13H2z" fill="#c9a838"/><path d="M4 9h20l-3 11H1z" fill="#f2dc78"/></svg>
<svg style="position:absolute;left:11px;top:328px;" width="23" height="26" viewBox="0 0 23 26"><path d="M5 1h9l3 3v7H5z" fill="#fff3b0" stroke="#d6b040"/><rect x="0.5" y="8" width="22" height="13" rx="2" fill="#1f72d4"/><rect x="3" y="10" width="16" height="3" fill="#0d4fa0"/><path d="M5 16h12v8H5z" fill="#f5e6a0" stroke="#d6b040"/></svg>
<svg style="position:absolute;left:9px;top:361px;" width="26" height="26" viewBox="0 0 26 26"><rect x="1" y="1" width="16" height="20" fill="#f6dc70" stroke="#d8b040"/><path d="M3 5h9M3 8h7M3 11h8M3 14h7" stroke="#b89830"/><circle cx="15" cy="9" r="6.5" fill="#e8eef4" stroke="#1d6ed0" stroke-width="2.2"/><path d="M19 14l6 8" stroke="#1d5cb8" stroke-width="3.5"/></svg>
<svg style="position:absolute;left:10px;top:442px;" width="25" height="25" viewBox="0 0 25 25"><circle cx="10" cy="6" r="5.5" fill="#2e9e28"/><path d="M5 5h11l-2 3H6z" fill="#1b7a18"/><rect x="7" y="9" width="6" height="4" fill="#f0a040"/><path d="M0.5 23c0-7 4-11 9.5-11s9.5 4 9.5 11z" fill="#4cc23a"/><path d="M7 14l3 8 3-8z" fill="#fff" opacity="0.6"/><circle cx="18" cy="17" r="6.5" fill="#3cb034" stroke="#fff" stroke-width="1"/><path d="M18 13v8M14 17h8" stroke="#fff" stroke-width="2.2"/></svg>
<svg style="position:absolute;left:10px;top:475px;" width="25" height="25" viewBox="0 0 25 25"><rect x="0" y="0" width="24" height="16" fill="#a8a8a8"/><rect x="0" y="4" width="24" height="4" fill="#6e6e6e"/><rect x="1" y="10" width="14" height="5" fill="#c8c8c8"/><path d="M13 11h6v6h4l-7 7-7-7h4z" fill="#bdbdbd" stroke="#f0f0f0" stroke-width="1"/></svg>
<svg style="position:absolute;left:10px;top:508px;" width="25" height="25" viewBox="0 0 25 25"><rect x="0" y="0" width="24" height="16" fill="#a8a8a8"/><rect x="0" y="4" width="24" height="4" fill="#6e6e6e"/><rect x="1" y="10" width="14" height="5" fill="#c8c8c8"/><path d="M16 8l7 7h-4v9h-6v-9h-4z" fill="#bdbdbd" stroke="#f0f0f0" stroke-width="1"/></svg>
<svg style="position:absolute;left:10px;top:541px;" width="25" height="25" viewBox="0 0 25 25"><circle cx="10" cy="6" r="5.5" fill="#2e9e28"/><path d="M5 5h11l-2 3H6z" fill="#1b7a18"/><rect x="7" y="9" width="6" height="4" fill="#f0a040"/><path d="M0.5 23c0-7 4-11 9.5-11s9.5 4 9.5 11z" fill="#4cc23a"/><path d="M7 14l3 8 3-8z" fill="#fff" opacity="0.6"/><path d="M11 14h6v-4l7 7-7 7v-4h-6z" fill="#3ec83a" stroke="#fff" stroke-width="1"/></svg>
<svg style="position:absolute;left:10px;top:574px;" width="25" height="25" viewBox="0 0 25 25"><circle cx="10" cy="10" r="9.5" fill="#2f86e0"/><path d="M4 6c3-2 6 0 5 4s-4 3-5 7c-2-3-3-8 0-11zM12 3c3 0 6 3 6 6-2 0-3-2-6-2z" fill="#7fd040"/><path d="M11 14h6v-4l7 7-7 7v-4h-6z" fill="#3ec83a" stroke="#fff" stroke-width="1"/></svg>
<svg style="position:absolute;left:10px;top:606px;" width="25" height="25" viewBox="0 0 25 25"><path d="M0 1h18v13H8l-4 4v-4H0z" fill="#4a78c0"/><text x="9" y="12" font-size="11" font-weight="700" fill="#fff" text-anchor="middle" font-family="Liberation Sans">S</text><path d="M11 14h6v-4l7 7-7 7v-4h-6z" fill="#3ec83a" stroke="#fff" stroke-width="1"/></svg>
<svg style="position:absolute;left:0px;top:258px;" width="372" height="70" viewBox="0 0 372 70"><ellipse cx="186" cy="35" rx="178.5" ry="26" fill="none" stroke="#ea1c24" stroke-width="5"/></svg>
</body></html>
